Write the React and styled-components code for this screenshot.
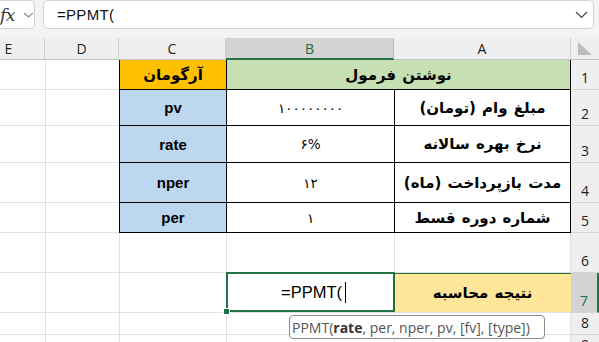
import React from 'react';
import styled, { createGlobalStyle, css } from 'styled-components';

const GlobalStyle = createGlobalStyle`
  html, body {
    margin: 0;
    padding: 0;
    background: #ffffff;
  }
  body {
    width: 599px;
    height: 342px;
    overflow: hidden;
    font-family: "Liberation Sans", Arial, sans-serif;
  }
`;

const GREEN = '#217346';
const GRID = '#e1e1e1';

const columns = [
  { id: 'A', width: 177 },
  { id: 'B', width: 168, selected: true },
  { id: 'C', width: 107 },
  { id: 'D', width: 74 },
  { id: 'E', width: 72 },
];

const rowHeights = [30, 36, 37, 40, 30, 40, 40, 22, 22];

const args = [
  { label: 'مبلغ وام (تومان)', value: '۱۰۰۰۰۰۰۰۰', arg: 'pv' },
  { label: 'نرخ بهره سالانه', value: '۶%', arg: 'rate' },
  { label: 'مدت بازپرداخت (ماه)', value: '۱۲', arg: 'nper' },
  { label: 'شماره دوره قسط', value: '۱', arg: 'per' },
];

export default function App() {
  return (
    <>
      <GlobalStyle />
      <TopBar>
        <FxBox>
          <Fx>fx</Fx>
          <svg width="11" height="6" viewBox="0 0 11 6">
            <path d="M1 0.8 L5.5 5 L10 0.8" fill="none" stroke="#8a8a8a" strokeWidth="1.1" />
          </svg>
        </FxBox>
        <FormulaBox>
          <FormulaText>=PPMT(</FormulaText>
          <svg width="13" height="8" viewBox="0 0 13 8">
            <path d="M1 1 L6.5 6.5 L12 1" fill="none" stroke="#444" strokeWidth="1.2" />
          </svg>
        </FormulaBox>
      </TopBar>

      <SheetWrap>
        <Sheet>
          <Corner>
            <svg width="16" height="15" viewBox="0 0 16 15">
              <path d="M1 1 L1 14 L15 14 Z" fill="#bdbdbd" />
            </svg>
          </Corner>
          {columns.map((c) => (
            <ColHeader key={c.id} $selected={c.selected}>
              {c.id}
            </ColHeader>
          ))}

          {/* row 1 */}
          <RowHeader>1</RowHeader>
          <Cell $span={2} $fill="#c6e0b4" $table $edge $persian>
            نوشتن فرمول
          </Cell>
          <Cell $fill="#ffc000" $table $persian>
            آرگومان
          </Cell>
          <Cell />
          <Cell />

          {args.map((r, i) => (
            <React.Fragment key={r.arg}>
              <RowHeader>{i + 2}</RowHeader>
              <Cell $table $edge $persian>
                {r.label}
              </Cell>
              <Cell $table $digits>
                {r.value}
              </Cell>
              <Cell $table $fill="#bdd7ee" $latin>
                {r.arg}
              </Cell>
              <Cell />
              <Cell />
            </React.Fragment>
          ))}

          {/* row 6 */}
          <RowHeader>6</RowHeader>
          <Cell $edge />
          <Cell />
          <Cell />
          <Cell />
          <Cell />

          {/* row 7 */}
          <RowHeader $selected>7</RowHeader>
          <Cell $fill="#ffe699" $persian $topLine>
            نتیجه محاسبه
          </Cell>
          <ActiveCell>
            <EditText>
              =PPMT(<Caret />
            </EditText>
          </ActiveCell>
          <Cell />
          <Cell />
          <Cell />

          {[8, 9].map((n) => (
            <React.Fragment key={n}>
              <RowHeader>{n}</RowHeader>
              <Cell $edge />
              <Cell />
              <Cell />
              <Cell />
              <Cell />
            </React.Fragment>
          ))}
        </Sheet>

        <Tooltip>
          PPMT(<b>rate</b>, per, nper, pv, [fv], [type])
        </Tooltip>
      </SheetWrap>
    </>
  );
}

const TopBar = styled.div`
  display: flex;
  align-items: flex-start;
  gap: 8px;
  height: 38px;
  background: #f3f3f3;
  padding-right: 5px;
  box-sizing: border-box;
`;

const FxBox = styled.div`
  display: flex;
  align-items: center;
  gap: 8px;
  width: 40px;
  height: 29px;
  margin-left: -5px;
  padding-left: 4px;
  box-sizing: border-box;
  background: #ffffff;
  border: 1px solid #d2d2d2;
  border-radius: 5px;
`;

const Fx = styled.span`
  font-family: "DejaVu Serif", "Liberation Serif", serif;
  font-style: italic;
  font-size: 17px;
  color: #333;
  letter-spacing: -0.5px;
`;

const FormulaBox = styled.div`
  flex: 1;
  display: flex;
  align-items: center;
  justify-content: space-between;
  height: 29px;
  padding: 0 5px 0 13px;
  box-sizing: border-box;
  background: #ffffff;
  border: 1px solid #d2d2d2;
  border-radius: 5px;
`;

const FormulaText = styled.span`
  font-size: 15px;
  color: #111;
  letter-spacing: 0.3px;
`;

const SheetWrap = styled.div`
  position: relative;
  width: 599px;
  height: 304px;
  overflow: hidden;
`;

const Sheet = styled.div`
  direction: rtl;
  display: grid;
  grid-template-columns: 28px ${columns.map((c) => `${c.width}px`).join(' ')};
  grid-template-rows: 22px ${rowHeights.map((h) => `${h}px`).join(' ')};
  width: 599px;
  overflow: hidden;
`;

const headerBase = css`
  box-sizing: border-box;
  background: #efefef;
  font-family: "Open Sans", "Noto Sans", sans-serif;
  font-size: 14px;
  color: #222;
`;

const Corner = styled.div`
  ${headerBase};
  display: flex;
  align-items: center;
  justify-content: center;
  border-bottom: 1px solid #c4c4c4;
`;

const ColHeader = styled.div`
  ${headerBase};
  display: flex;
  align-items: center;
  justify-content: center;
  border-right: 1px solid #cfcfcf;
  border-bottom: 1px solid #c4c4c4;
  ${(p) =>
    p.$selected &&
    css`
      background: #d3d3d3;
      color: #1d6b40;
      border-bottom: 2px solid ${GREEN};
      border-right-color: #b8b8b8;
    `}
`;

const RowHeader = styled.div`
  ${headerBase};
  display: flex;
  align-items: flex-end;
  justify-content: center;
  padding-bottom: 1px;
  border-bottom: 1px solid #d6d6d6;
  line-height: 20px;
  ${(p) =>
    p.$selected &&
    css`
      background: #d3d3d3;
      color: #1d6b40;
      border-right: 2px solid ${GREEN};
    `}
`;

const Cell = styled.div`
  box-sizing: border-box;
  display: flex;
  align-items: center;
  justify-content: center;
  grid-column: span ${(p) => p.$span || 1};
  background: ${(p) => p.$fill || '#ffffff'};
  color: #000;
  border-left: 1px solid ${(p) => (p.$table ? '#000' : GRID)};
  border-bottom: 1px solid ${(p) => (p.$table ? '#000' : GRID)};
  border-right: ${(p) => (p.$edge ? `1px solid ${p.$table ? '#000' : GRID}` : 'none')};
  white-space: nowrap;
  ${(p) =>
    p.$persian &&
    css`
      font-family: "DejaVu Sans", sans-serif;
      font-weight: bold;
      font-size: 15px;
      word-spacing: 1px;
    `}
  ${(p) =>
    p.$latin &&
    css`
      font-family: "Liberation Sans", Arial, sans-serif;
      font-weight: bold;
      font-size: 15px;
    `}
  ${(p) =>
    p.$digits &&
    css`
      font-family: "DejaVu Sans", sans-serif;
      font-size: 13.5px;
      letter-spacing: -0.5px;
    `}
  ${(p) =>
    p.$topLine &&
    css`
      box-shadow: inset 0 1px 0 #2c6a45;
      border-left: none;
    `}
`;

const ActiveCell = styled.div`
  position: relative;
  box-sizing: border-box;
  display: flex;
  align-items: center;
  justify-content: center;
  background: #ffffff;
  border-left: 1px solid ${GRID};
  border-bottom: 1px solid ${GRID};

  &::after {
    content: '';
    position: absolute;
    inset: -1px -1px 0 -1px;
    border: 2px solid ${GREEN};
    pointer-events: none;
  }

  &::before {
    content: '';
    position: absolute;
    left: -4px;
    bottom: -3px;
    width: 5px;
    height: 5px;
    background: ${GREEN};
    border: 1px solid #ffffff;
    z-index: 2;
  }
`;

const EditText = styled.span`
  direction: ltr;
  display: flex;
  align-items: center;
  font-family: "Liberation Sans", Arial, sans-serif;
  font-size: 16.5px;
  color: #000;
  margin-left: 6px;
`;

const Caret = styled.span`
  display: inline-block;
  width: 1px;
  height: 21px;
  margin-left: 3px;
  background: #000;
`;

const Tooltip = styled.div`
  position: absolute;
  left: 289px;
  top: 277px;
  width: 256px;
  height: 24px;
  box-sizing: border-box;
  display: flex;
  align-items: center;
  padding-left: 2px;
  background: #ffffff;
  border: 1px solid #8c8c8c;
  border-radius: 4px;
  font-family: "Open Sans", "Noto Sans", sans-serif;
  font-size: 14px;
  color: #555;
  white-space: nowrap;

  b {
    color: #333;
    font-weight: 700;
  }
`;
